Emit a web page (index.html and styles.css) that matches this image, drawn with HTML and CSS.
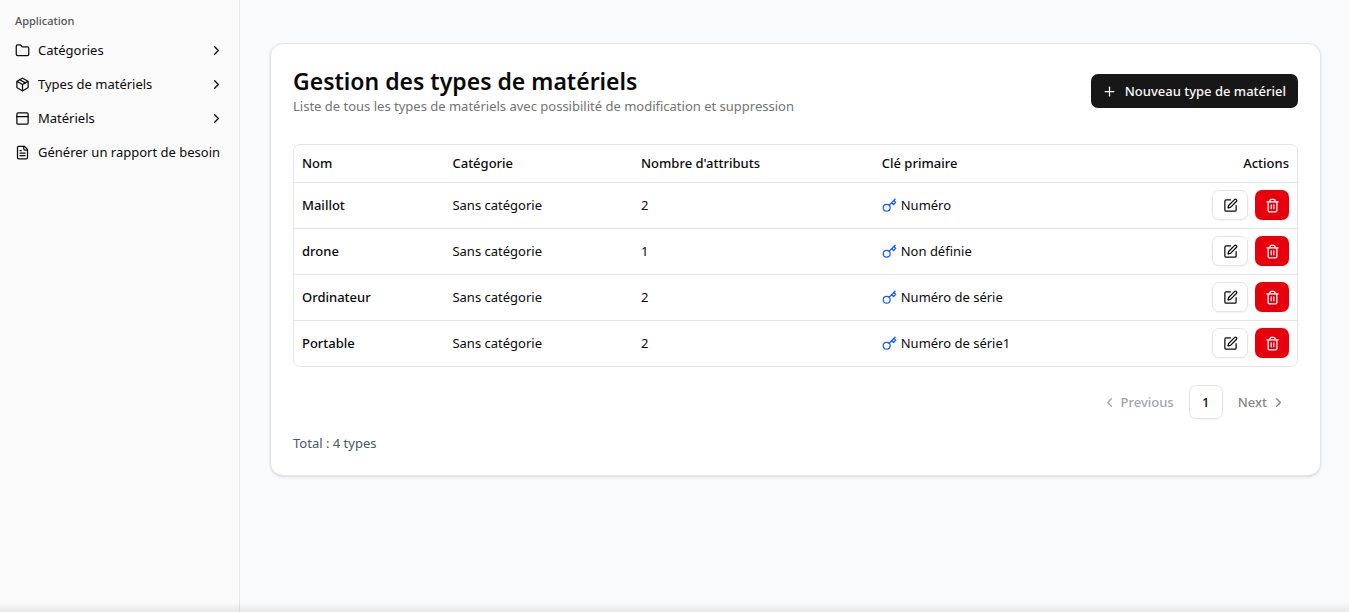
FILE: index.html
```html
<!DOCTYPE html>
<html lang="fr">
<head>
<meta charset="utf-8">
<meta name="viewport" content="width=device-width, initial-scale=1">
<title>Gestion des types de matériels</title>
<link rel="stylesheet" href="styles.css">
</head>
<body>
<svg class="sprite" aria-hidden="true">
  <symbol id="chevron-right" viewBox="0 0 24 24"><path d="m9 18 6-6-6-6"/></symbol>
  <symbol id="chevron-left" viewBox="0 0 24 24"><path d="m15 18-6-6 6-6"/></symbol>
  <symbol id="folder" viewBox="0 0 24 24"><path d="M20 20a2 2 0 0 0 2-2V8a2 2 0 0 0-2-2h-7.900a2 2 0 0 1-1.690-.900L9.600 3.900A2 2 0 0 0 7.930 3H4a2 2 0 0 0-2 2v13a2 2 0 0 0 2 2Z"/></symbol>
  <symbol id="package" viewBox="0 0 24 24"><path d="M11 21.730a2 2 0 0 0 2 0l7-4A2 2 0 0 0 21 16V8a2 2 0 0 0-1-1.730l-7-4a2 2 0 0 0-2 0l-7 4A2 2 0 0 0 3 8v8a2 2 0 0 0 1 1.730z"/><path d="M12 22V12"/><path d="M3.300 7 12 12l8.700-5"/><path d="m7.500 4.270 9 5.150"/></symbol>
  <symbol id="panel" viewBox="0 0 24 24"><rect x="3" y="3" width="18" height="18" rx="2"/><path d="M3 9h18"/></symbol>
  <symbol id="file" viewBox="0 0 24 24"><path d="M15 2H6a2 2 0 0 0-2 2v16a2 2 0 0 0 2 2h12a2 2 0 0 0 2-2V7Z"/><path d="M14 2v4a2 2 0 0 0 2 2h4"/><path d="M10 9H8"/><path d="M16 13H8"/><path d="M16 17H8"/></symbol>
  <symbol id="plus" viewBox="0 0 24 24"><path d="M5 12h14"/><path d="M12 5v14"/></symbol>
  <symbol id="key" viewBox="0 0 24 24"><circle cx="7.500" cy="15.500" r="5.500"/><path d="m21 2-9.600 9.600"/><path d="m15.500 7.500 3 3L22 7l-3-3"/></symbol>
  <symbol id="pen" viewBox="0 0 24 24"><path d="M12 3H5a2 2 0 0 0-2 2v14a2 2 0 0 0 2 2h14a2 2 0 0 0 2-2v-7"/><path d="M18.375 2.625a1 1 0 0 1 3 3l-9.013 9.014a2 2 0 0 1-.853.505l-2.873.840a.5.5 0 0 1-.620-.620l.840-2.873a2 2 0 0 1 .506-.852z"/></symbol>
  <symbol id="trash" viewBox="0 0 24 24"><path d="M3 6h18"/><path d="M19 6v14a2 2 0 0 1-2 2H7a2 2 0 0 1-2-2V6"/><path d="M8 6V4a2 2 0 0 1 2-2h4a2 2 0 0 1 2 2v2"/><path d="M10 11v6"/><path d="M14 11v6"/></symbol>
</svg>
<div class="app">
  <aside class="sidebar">
    <div class="sidebar-label">Application</div>
    <nav class="menu" aria-label="Application">
      <button class="menu-item" type="button"><svg class="icon"><use href="#folder"/></svg><span>Catégories</span><svg class="icon menu-chevron"><use href="#chevron-right"/></svg></button>
      <button class="menu-item" type="button"><svg class="icon"><use href="#package"/></svg><span>Types de matériels</span><svg class="icon menu-chevron"><use href="#chevron-right"/></svg></button>
      <button class="menu-item" type="button"><svg class="icon"><use href="#panel"/></svg><span>Matériels</span><svg class="icon menu-chevron"><use href="#chevron-right"/></svg></button>
      <a class="menu-item" href="#rapport"><svg class="icon"><use href="#file"/></svg><span>Générer un rapport de besoin</span></a>
    </nav>
  </aside>
  <main class="main">
    <section class="card">
      <header class="card-header">
        <div>
          <h1 class="title">Gestion des types de matériels</h1>
          <p class="subtitle">Liste de tous les types de matériels avec possibilité de modification et suppression</p>
        </div>
        <button class="btn-primary" type="button"><svg class="icon"><use href="#plus"/></svg>Nouveau type de matériel</button>
      </header>
      <div class="table-wrap">
        <table class="table">
          <thead>
            <tr><th class="col-name">Nom</th><th class="col-category">Catégorie</th><th class="col-count">Nombre d'attributs</th><th>Clé primaire</th><th class="col-actions">Actions</th></tr>
          </thead>
          <tbody>
            <tr><td class="name">Maillot</td><td>Sans catégorie</td><td>2</td><td><div class="key"><svg class="icon"><use href="#key"/></svg>Numéro</div></td><td><div class="actions"><button class="btn-edit" type="button" aria-label="Modifier Maillot"><svg class="icon"><use href="#pen"/></svg></button><button class="btn-delete" type="button" aria-label="Supprimer Maillot"><svg class="icon"><use href="#trash"/></svg></button></div></td></tr>
            <tr><td class="name">drone</td><td>Sans catégorie</td><td>1</td><td><div class="key"><svg class="icon"><use href="#key"/></svg>Non définie</div></td><td><div class="actions"><button class="btn-edit" type="button" aria-label="Modifier drone"><svg class="icon"><use href="#pen"/></svg></button><button class="btn-delete" type="button" aria-label="Supprimer drone"><svg class="icon"><use href="#trash"/></svg></button></div></td></tr>
            <tr><td class="name">Ordinateur</td><td>Sans catégorie</td><td>2</td><td><div class="key"><svg class="icon"><use href="#key"/></svg>Numéro de série</div></td><td><div class="actions"><button class="btn-edit" type="button" aria-label="Modifier Ordinateur"><svg class="icon"><use href="#pen"/></svg></button><button class="btn-delete" type="button" aria-label="Supprimer Ordinateur"><svg class="icon"><use href="#trash"/></svg></button></div></td></tr>
            <tr><td class="name">Portable</td><td>Sans catégorie</td><td>2</td><td><div class="key"><svg class="icon"><use href="#key"/></svg>Numéro de série1</div></td><td><div class="actions"><button class="btn-edit" type="button" aria-label="Modifier Portable"><svg class="icon"><use href="#pen"/></svg></button><button class="btn-delete" type="button" aria-label="Supprimer Portable"><svg class="icon"><use href="#trash"/></svg></button></div></td></tr>
          </tbody>
        </table>
      </div>
      <nav class="pagination" aria-label="Pagination">
        <a class="page-link page-previous" href="#previous"><svg class="icon"><use href="#chevron-left"/></svg>Previous</a>
        <a class="page-current" href="#page-1" aria-current="page">1</a>
        <a class="page-link page-next" href="#next">Next<svg class="icon"><use href="#chevron-right"/></svg></a>
      </nav>
      <p class="total">Total : 4 types</p>
    </section>
  </main>
</div>
</body>
</html>
```
FILE: styles.css
```css
*, *::before, *::after {
  box-sizing: border-box;
}

body {
  margin: 0;
  background: #f9fafb;
  color: #0a0a0a;
  font-family: "Noto Sans", sans-serif;
  font-size: 13px;
  line-height: 20px;
}

/* Soft shade along the lower edge of the window */
body::after {
  content: "";
  position: fixed;
  right: 0;
  bottom: 0;
  left: 0;
  height: 10px;
  background: linear-gradient(to bottom, rgba(0, 0, 0, 0), rgba(0, 0, 0, 0.07));
  pointer-events: none;
}

h1, p {
  margin: 0;
}

button {
  font: inherit;
  color: inherit;
  cursor: pointer;
}

a {
  color: inherit;
  text-decoration: none;
}

.sprite {
  position: absolute;
  width: 0;
  height: 0;
}

.icon {
  flex: none;
  width: 15px;
  height: 15px;
  fill: none;
  stroke: currentColor;
  stroke-width: 2;
  stroke-linecap: round;
  stroke-linejoin: round;
}

.app {
  display: flex;
  min-height: 100vh;
}

.sidebar {
  flex: none;
  width: 240px;
  padding: 6px 8px;
  background: #fafafa;
  border-right: 1px solid #e5e5e5;
}

.sidebar-label {
  display: flex;
  align-items: center;
  height: 29px;
  padding: 0 7px;
  color: #545454;
  font-size: 11px;
  font-weight: 500;
}

.menu {
  display: flex;
  flex-direction: column;
  gap: 4px;
}

.menu-item {
  display: flex;
  align-items: center;
  gap: 8px;
  height: 30px;
  padding: 0 7px;
  border: 0;
  background: none;
  text-align: left;
  white-space: nowrap;
}

.menu-chevron {
  margin-left: auto;
}

.main {
  flex: 1;
  min-width: 0;
  padding: 43px 28px 43px 30px;
  background: #f9fafc;
}

.card {
  padding: 22px;
  background: #fff;
  border: 1px solid #e5e5e5;
  border-radius: 13px;
  box-shadow: 0 1px 3px rgba(0, 0, 0, 0.1), 0 1px 2px -1px rgba(0, 0, 0, 0.1);
}

.card-header {
  display: flex;
  align-items: center;
  justify-content: space-between;
  margin-bottom: 28px;
}

.title {
  font-size: 23px;
  font-weight: 600;
  line-height: 30px;
}

.subtitle {
  color: #737373;
}

.btn-primary {
  display: flex;
  align-items: center;
  gap: 8px;
  height: 34px;
  padding: 0 12px 0 11px;
  border: 0;
  border-radius: 7px;
  background: #171717;
  color: #fafafa;
  font-weight: 500;
}

.table-wrap {
  border: 1px solid #e5e5e5;
  border-radius: 7px;
  overflow: hidden;
}

.table {
  width: 100%;
  border-collapse: separate;
  border-spacing: 0;
}

.table th {
  height: 38px;
  padding: 0 8px 1px;
  border-bottom: 1px solid #e5e5e5;
  font-weight: 500;
  text-align: left;
}

.table .col-name {
  width: 15%;
}

.table .col-category {
  width: 18.8%;
}

.table .col-count {
  width: 24%;
}

.table .col-actions {
  text-align: right;
}

.table td {
  padding: 7px 8px 8px;
  border-bottom: 1px solid #e5e5e5;
}

.table tbody tr:last-child td {
  border-bottom: 0;
}

.table .name {
  font-weight: 500;
}

.key {
  display: flex;
  align-items: center;
  gap: 4px;
}

.key .icon {
  color: #155dfc;
}

.actions {
  display: flex;
  justify-content: flex-end;
  gap: 7px;
}

.btn-edit, .btn-delete {
  display: flex;
  align-items: center;
  justify-content: center;
  height: 30px;
  padding: 0;
  border-radius: 7px;
}

.btn-edit {
  width: 36px;
  border: 1px solid #e5e5e5;
  background: #fff;
  box-shadow: 0 1px 2px rgba(0, 0, 0, 0.05);
}

.btn-delete {
  width: 34px;
  border: 0;
  background: #e7000b;
  color: #fff;
}

.pagination {
  display: flex;
  align-items: center;
  justify-content: flex-end;
  gap: 4px;
  margin: 18px 0 14px;
  font-weight: 500;
}

.page-link {
  display: flex;
  align-items: center;
  gap: 4px;
  height: 34px;
  padding: 0 11px;
  color: #858585;
}

.page-previous {
  color: #a0a4ae;
}

.page-next {
  padding-right: 12px;
}

.page-current {
  display: flex;
  align-items: center;
  justify-content: center;
  width: 34px;
  height: 34px;
  border: 1px solid #e5e5e5;
  border-radius: 7px;
  color: #0a0a0a;
  box-shadow: 0 1px 2px rgba(0, 0, 0, 0.05);
}

.total {
  color: #4a5565;
}
```
